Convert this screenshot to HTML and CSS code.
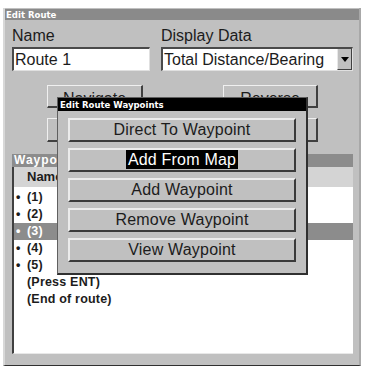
FILE: index.html
```html
<!DOCTYPE html>
<html lang="en">
  <head>
    <meta charset="UTF-8" />
    <meta name="viewport" content="width=device-width, initial-scale=1.0" />
    <title>Edit Route</title>
    <link rel="stylesheet" href="styles.css">
  </head>
  <body>
    <div class="window">
      <div class="titlebar">Edit Route</div>
      <div class="content">
        <div class="fields">
          <div class="field">
            <label>Name</label>
            <div class="textbox">Route 1</div>
          </div>
          <div class="field">
            <label>Display Data</label>
            <div class="textbox select">
              <span>Total Distance/Bearing</span>
              <span class="arrow"></span>
            </div>
          </div>
        </div>

        <div class="actions">
          <div class="btn">Navigate</div>
          <div class="btn">Reverse</div>
          <div class="btn"></div>
          <div class="btn"></div>
        </div>

        <div class="section-title">Waypoints</div>
        <div class="list">
          <div class="list-head">Name</div>
          <ul class="rows">
            <li><span class="dot">•</span>(1)</li>
            <li><span class="dot">•</span>(2)</li>
            <li class="selected"><span class="dot">•</span>(3)</li>
            <li><span class="dot">•</span>(4)</li>
            <li><span class="dot">•</span>(5)</li>
            <li class="note">(Press ENT)</li>
            <li class="note">(End of route)</li>
          </ul>
        </div>
      </div>

      <!-- Popup menu over the form -->
      <div class="popup">
        <div class="popup-title">Edit Route Waypoints</div>
        <div class="menu">
          <div class="menu-btn">Direct To Waypoint</div>
          <div class="menu-btn"><span class="hl">Add From Map</span></div>
          <div class="menu-btn">Add Waypoint</div>
          <div class="menu-btn">Remove Waypoint</div>
          <div class="menu-btn">View Waypoint</div>
        </div>
      </div>
    </div>
  </body>
</html>
```

FILE: styles.css
```css
body {
  margin: 0;
  background: #fff;
  font-family: "Liberation Sans", Arial, sans-serif;
  color: #1c1c1c;
}

.window {
  position: relative;
  box-sizing: border-box;
  width: 358px;
  height: 358px;
  margin: 8px 0 0 3px;
  background: #c0c0c0;
  border-left: 2px solid #d8d8d8;
  border-right: 2px solid #a8a8a8;
  border-bottom: 1px solid #303030;
  display: flex;
  flex-direction: column;
}

.titlebar {
  height: 11px;
  margin-top: 1px;
  background: #8a8a8a;
  color: #fff;
  font-family: "Liberation Sans Narrow", "DejaVu Sans Condensed", sans-serif;
  font-weight: bold;
  font-size: 9.5px;
  line-height: 11px;
  padding-left: 1px;
}

.content {
  flex: 1;
  display: flex;
  flex-direction: column;
  padding: 0 6px 11px 7px;
}

.fields {
  display: grid;
  grid-template-columns: 138px 1fr;
  column-gap: 11px;
  margin-top: 7px;
}

.field label {
  display: block;
  font-size: 16px;
  line-height: 18px;
  margin-bottom: 2px;
}

.textbox {
  box-sizing: border-box;
  height: 24px;
  background: #fff;
  border-top: 2px solid #4a4a4a;
  border-left: 2px solid #4a4a4a;
  border-bottom: 1px solid #e0e0e0;
  border-right: 1px solid #e0e0e0;
  font-size: 16px;
  line-height: 22px;
  padding-left: 1px;
}

.select {
  display: flex;
  justify-content: space-between;
}

.arrow {
  box-sizing: border-box;
  width: 15px;
  height: 21px;
  background: #c0c0c0;
  border-left: 1px solid #e8e8e8;
  border-right: 1px solid #404040;
  border-bottom: 1px solid #404040;
  display: flex;
  align-items: center;
  justify-content: center;
}

.arrow::after {
  content: "";
  border-left: 4px solid transparent;
  border-right: 4px solid transparent;
  border-top: 5px solid #000;
}

.actions {
  display: grid;
  grid-template-columns: 96px 95px;
  grid-auto-rows: 23px 24px;
  column-gap: 80px;
  row-gap: 10px;
  margin: 14px 0 0 35px;
}

.btn {
  box-sizing: border-box;
  background: #c0c0c0;
  border-top: 1px solid #f0f0f0;
  border-left: 1px solid #f0f0f0;
  border-bottom: 2px solid #404040;
  border-right: 2px solid #404040;
  text-align: center;
  font-size: 16px;
  line-height: 20px;
  padding-top: 3px;
}

.section-title {
  margin-top: 12px;
  height: 13px;
  background: #8c8c8c;
  color: #fff;
  font-weight: bold;
  font-size: 12px;
  letter-spacing: 1px;
  line-height: 13px;
  padding-left: 2px;
}

.list {
  flex: 1;
  background: #fff;
  border-left: 2px solid #404040;
  border-bottom: 1px solid #e8e8e8;
}

.list-head {
  height: 20px;
  background: #d4d4d4;
  font-weight: bold;
  font-size: 13px;
  line-height: 20px;
  padding-left: 13px;
}

.rows {
  list-style: none;
  margin: 0;
  padding: 2px 0 0;
}

.rows li {
  display: flex;
  height: 17px;
  line-height: 17px;
  font-weight: bold;
  font-size: 12.5px;
  letter-spacing: 0.2px;
  padding-left: 2px;
}

.rows .dot {
  width: 11px;
}

.rows li.selected {
  background: #8c8c8c;
  color: #fff;
}

.rows li.note {
  padding-left: 13px;
}

.popup {
  position: absolute;
  left: 52px;
  top: 89px;
  box-sizing: border-box;
  width: 251px;
  height: 178px;
  background: #c0c0c0;
  border: 1px solid #606060;
  border-right: 2px solid #303030;
  border-bottom: 2px solid #303030;
}

.popup-title {
  height: 13px;
  background: #000;
  color: #fff;
  font-family: "Liberation Sans Narrow", "DejaVu Sans Condensed", sans-serif;
  font-weight: bold;
  font-size: 9.5px;
  line-height: 13px;
  padding-left: 2px;
}

.menu {
  display: flex;
  flex-direction: column;
  gap: 6px;
  padding: 7px 0 0 10px;
}

.menu-btn {
  box-sizing: border-box;
  width: 228px;
  height: 24px;
  border-top: 2px solid #ececec;
  border-left: 2px solid #ececec;
  border-bottom: 2px solid #3a3a3a;
  border-right: 2px solid #3a3a3a;
  font-size: 16px;
  letter-spacing: 0.2px;
  line-height: 20px;
  text-align: center;
}

.menu-btn .hl {
  background: #000;
  color: #fff;
  padding: 1px 2px;
}
```
